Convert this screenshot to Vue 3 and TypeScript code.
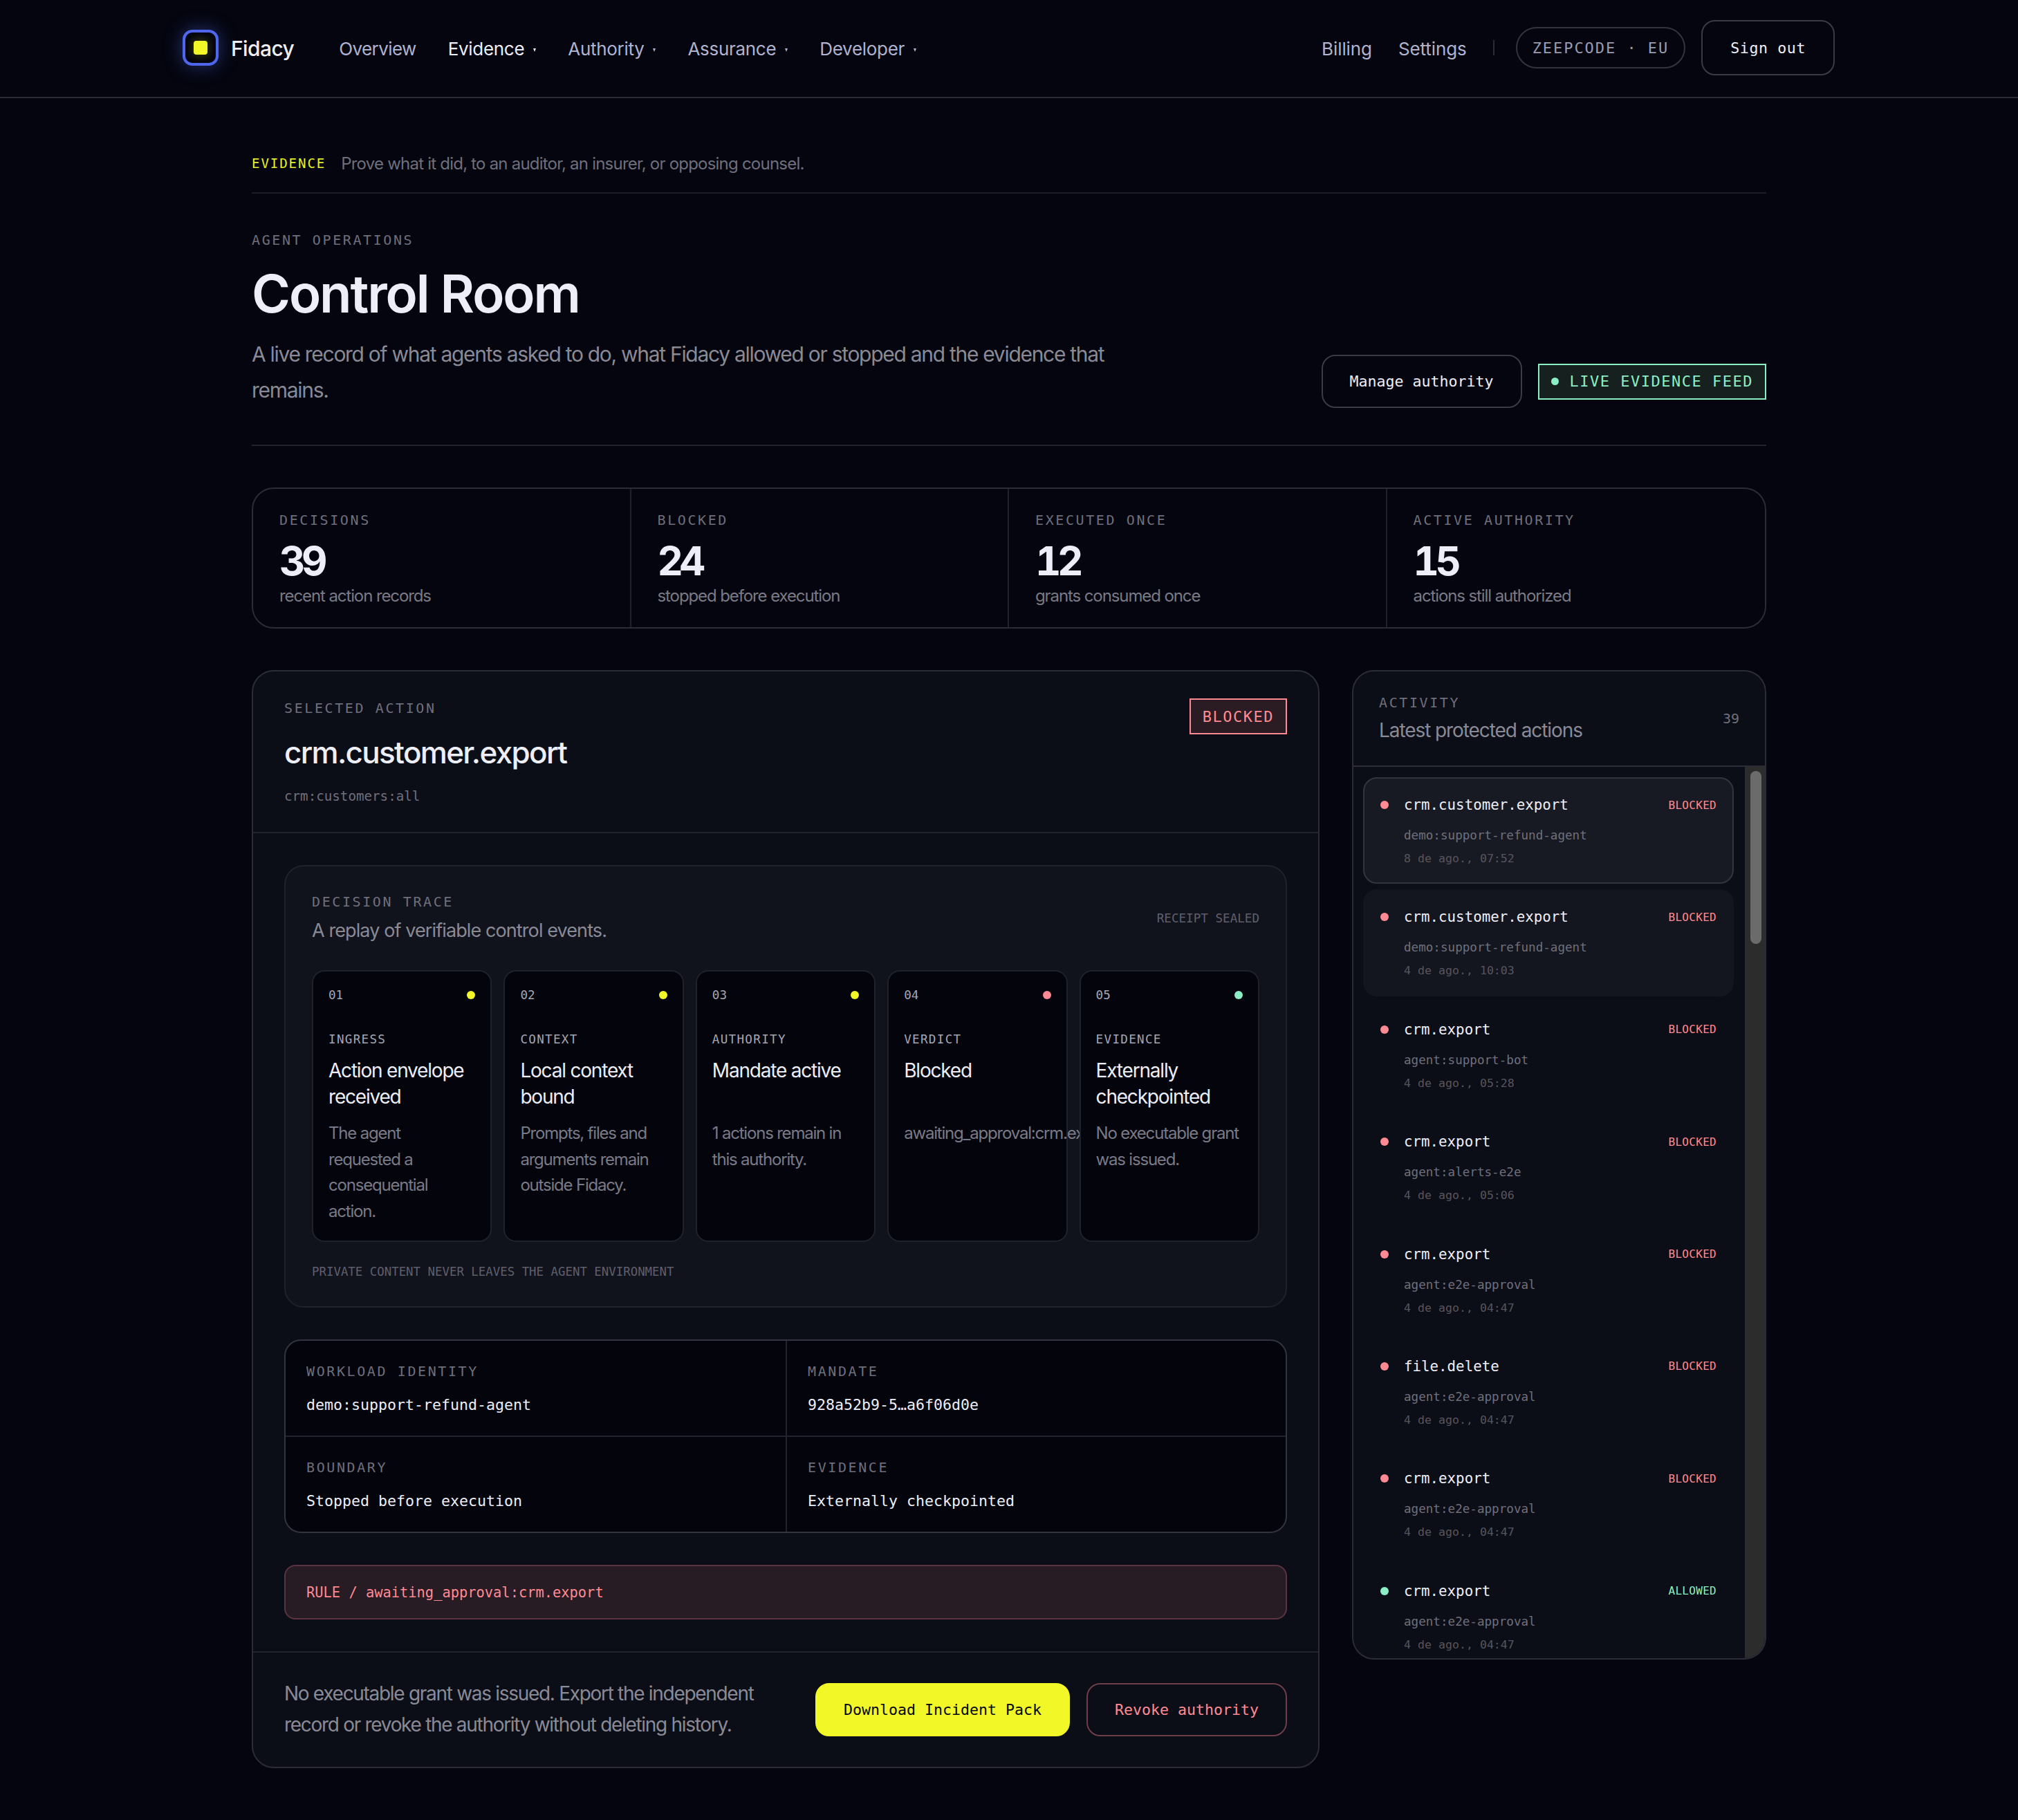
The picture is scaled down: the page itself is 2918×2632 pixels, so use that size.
<script setup lang="ts">
interface Stat {
  label: string
  value: string
  note: string
}

interface Step {
  num: string
  tone: 'warn' | 'bad' | 'ok'
  label: string
  title: string
  desc: string
}

interface Activity {
  name: string
  agent: string
  date: string
  status: 'BLOCKED' | 'ALLOWED'
  state?: 'active' | 'soft'
}

const navItems = [
  { label: 'Overview', caret: false, active: false },
  { label: 'Evidence', caret: true, active: true },
  { label: 'Authority', caret: true, active: false },
  { label: 'Assurance', caret: true, active: false },
  { label: 'Developer', caret: true, active: false }
]

const stats: Stat[] = [
  { label: 'DECISIONS', value: '39', note: 'recent action records' },
  { label: 'BLOCKED', value: '24', note: 'stopped before execution' },
  { label: 'EXECUTED ONCE', value: '12', note: 'grants consumed once' },
  { label: 'ACTIVE AUTHORITY', value: '15', note: 'actions still authorized' }
]

const steps: Step[] = [
  { num: '01', tone: 'warn', label: 'INGRESS', title: 'Action envelope received', desc: 'The agent requested a consequential action.' },
  { num: '02', tone: 'warn', label: 'CONTEXT', title: 'Local context bound', desc: 'Prompts, files and arguments remain outside Fidacy.' },
  { num: '03', tone: 'warn', label: 'AUTHORITY', title: 'Mandate active', desc: '1 actions remain in this authority.' },
  { num: '04', tone: 'bad', label: 'VERDICT', title: 'Blocked', desc: 'awaiting_approval:crm.export' },
  { num: '05', tone: 'ok', label: 'EVIDENCE', title: 'Externally checkpointed', desc: 'No executable grant was issued.' }
]

const facts = [
  { label: 'WORKLOAD IDENTITY', value: 'demo:support-refund-agent' },
  { label: 'MANDATE', value: '928a52b9-5…a6f06d0e' },
  { label: 'BOUNDARY', value: 'Stopped before execution' },
  { label: 'EVIDENCE', value: 'Externally checkpointed' }
]

const activity: Activity[] = [
  { name: 'crm.customer.export', agent: 'demo:support-refund-agent', date: '8 de ago., 07:52', status: 'BLOCKED', state: 'active' },
  { name: 'crm.customer.export', agent: 'demo:support-refund-agent', date: '4 de ago., 10:03', status: 'BLOCKED', state: 'soft' },
  { name: 'crm.export', agent: 'agent:support-bot', date: '4 de ago., 05:28', status: 'BLOCKED' },
  { name: 'crm.export', agent: 'agent:alerts-e2e', date: '4 de ago., 05:06', status: 'BLOCKED' },
  { name: 'crm.export', agent: 'agent:e2e-approval', date: '4 de ago., 04:47', status: 'BLOCKED' },
  { name: 'file.delete', agent: 'agent:e2e-approval', date: '4 de ago., 04:47', status: 'BLOCKED' },
  { name: 'crm.export', agent: 'agent:e2e-approval', date: '4 de ago., 04:47', status: 'BLOCKED' },
  { name: 'crm.export', agent: 'agent:e2e-approval', date: '4 de ago., 04:47', status: 'ALLOWED' }
]
</script>

<template>
  <div class="page">
    <header class="topbar">
      <div class="topbar-left">
        <div class="brand">
          <span class="brand-mark"><span class="brand-core"></span></span>
          <span class="brand-name">Fidacy</span>
        </div>
        <nav class="nav">
          <span
            v-for="item in navItems"
            :key="item.label"
            class="nav-item"
            :class="{ 'is-active': item.active }"
          >
            {{ item.label }}<i v-if="item.caret" class="caret"></i>
          </span>
        </nav>
      </div>
      <div class="topbar-right">
        <span class="nav-item">Billing</span>
        <span class="nav-item">Settings</span>
        <span class="divider"></span>
        <span class="org-pill">ZEEPCODE · EU</span>
        <button class="btn btn-signout">Sign out</button>
      </div>
    </header>

    <main class="content">
      <div class="eyebrow">
        <span class="eyebrow-tag">EVIDENCE</span>
        <span class="eyebrow-text">Prove what it did, to an auditor, an insurer, or opposing counsel.</span>
      </div>

      <section class="hero">
        <div class="hero-copy">
          <div class="label">AGENT OPERATIONS</div>
          <h1 class="hero-title">Control Room</h1>
          <p class="hero-desc">A live record of what agents asked to do, what Fidacy allowed or stopped and the evidence that remains.</p>
        </div>
        <div class="hero-actions">
          <button class="btn">Manage authority</button>
          <span class="live-badge"><i class="live-dot"></i>LIVE EVIDENCE FEED</span>
        </div>
      </section>

      <section class="stats">
        <div v-for="stat in stats" :key="stat.label" class="stat">
          <div class="label">{{ stat.label }}</div>
          <div class="stat-value">{{ stat.value }}</div>
          <div class="stat-note">{{ stat.note }}</div>
        </div>
      </section>

      <div class="columns">
        <section class="panel">
          <div class="panel-head">
            <div>
              <div class="label">SELECTED ACTION</div>
              <h2 class="action-title">crm.customer.export</h2>
              <div class="action-scope">crm:customers:all</div>
            </div>
            <span class="blocked-badge">BLOCKED</span>
          </div>

          <div class="panel-body">
            <div class="trace">
              <div class="trace-head">
                <div>
                  <div class="label">DECISION TRACE</div>
                  <div class="trace-sub">A replay of verifiable control events.</div>
                </div>
                <span class="trace-seal">RECEIPT SEALED</span>
              </div>
              <div class="steps">
                <article v-for="step in steps" :key="step.num" class="step">
                  <div class="step-top">
                    <span class="step-num">{{ step.num }}</span>
                    <i class="dot" :class="`dot-${step.tone}`"></i>
                  </div>
                  <div class="step-label">{{ step.label }}</div>
                  <h3 class="step-title">{{ step.title }}</h3>
                  <p class="step-desc">{{ step.desc }}</p>
                </article>
              </div>
              <div class="trace-note">PRIVATE CONTENT NEVER LEAVES THE AGENT ENVIRONMENT</div>
            </div>

            <div class="facts">
              <div v-for="fact in facts" :key="fact.label" class="fact">
                <div class="label">{{ fact.label }}</div>
                <div class="fact-value">{{ fact.value }}</div>
              </div>
            </div>

            <div class="rule">RULE / awaiting_approval:crm.export</div>
          </div>

          <div class="panel-foot">
            <p class="foot-text">No executable grant was issued. Export the independent record or revoke the authority without deleting history.</p>
            <div class="foot-actions">
              <button class="btn btn-primary">Download Incident Pack</button>
              <button class="btn btn-danger">Revoke authority</button>
            </div>
          </div>
        </section>

        <aside class="side">
          <div class="side-head">
            <div>
              <div class="label">ACTIVITY</div>
              <div class="side-title">Latest protected actions</div>
            </div>
            <span class="side-count">39</span>
          </div>
          <div class="side-body">
            <div class="feed">
              <div
                v-for="(row, index) in activity"
                :key="index"
                class="feed-item"
                :class="row.state ? `is-${row.state}` : ''"
              >
                <i class="dot" :class="row.status === 'BLOCKED' ? 'dot-bad' : 'dot-ok'"></i>
                <span class="feed-name">{{ row.name }}</span>
                <span class="feed-status" :class="{ 'is-ok': row.status === 'ALLOWED' }">{{ row.status }}</span>
                <span class="feed-agent">{{ row.agent }}</span>
                <span class="feed-date">{{ row.date }}</span>
              </div>
            </div>
            <div class="scroll-track"><div class="scroll-thumb"></div></div>
          </div>
        </aside>
      </div>
    </main>
  </div>
</template>

<style scoped>
.page {
  min-height: 2632px;
  background: #04050e;
  color: #eeeef8;
  font-family: Inter, "Noto Sans", sans-serif;
}

h1, h2, h3, p {
  margin: 0;
  font-weight: 500;
}

.label,
.btn,
.org-pill,
.eyebrow-tag,
.live-badge,
.blocked-badge,
.action-scope,
.trace-seal,
.trace-note,
.step-num,
.step-label,
.fact-value,
.rule,
.side-count,
.feed-name,
.feed-status,
.feed-agent,
.feed-date {
  font-family: "DejaVu Sans Mono", "Liberation Mono", monospace;
}

.label {
  font-size: 20px;
  line-height: 28px;
  letter-spacing: 2.6px;
  color: #6f6f7c;
}

/* Top bar */
.topbar {
  height: 142px;
  box-sizing: border-box;
  padding: 0 265px 2px 264px;
  display: flex;
  align-items: center;
  justify-content: space-between;
  border-bottom: 2px solid #2b2c37;
}

.topbar-left,
.topbar-right,
.brand,
.nav {
  display: flex;
  align-items: center;
}

.brand {
  gap: 18px;
  margin-right: 65px;
}

.brand-mark {
  width: 52px;
  height: 52px;
  box-sizing: border-box;
  border: 4px solid #4f66ee;
  border-radius: 14px;
  display: flex;
  align-items: center;
  justify-content: center;
  box-shadow: 0 0 28px rgba(79, 102, 238, 0.45);
}

.brand-core {
  width: 20px;
  height: 20px;
  border-radius: 4px;
  background: #f2f728;
  box-shadow: 0 0 14px rgba(242, 247, 40, 0.3);
}

.brand-name {
  padding-top: 2px;
  font-size: 30px;
  font-weight: 500;
  letter-spacing: -0.6px;
  color: #eeeef8;
}

.nav {
  gap: 46px;
}

.nav-item {
  padding-top: 2px;
  font-size: 26px;
  letter-spacing: -0.3px;
  color: #b0b3cf;
  white-space: nowrap;
}

.nav .nav-item:first-child {
  letter-spacing: -0.6px;
}

.topbar-right .nav-item {
  letter-spacing: -0.1px;
}

.nav-item.is-active {
  color: #eeeef8;
}

.caret {
  display: inline-block;
  margin-left: 13px;
  vertical-align: middle;
  border-left: 2.5px solid transparent;
  border-right: 2.5px solid transparent;
  border-top: 5px solid currentColor;
}

.topbar-right {
  gap: 38px;
}

.topbar-right .org-pill {
  margin-left: -7px;
  margin-right: -15px;
}

.divider {
  width: 2px;
  height: 22px;
  background: #2b2c37;
}

.org-pill {
  box-sizing: border-box;
  height: 60px;
  padding: 0 22px;
  display: flex;
  align-items: center;
  border: 2px solid #33343f;
  border-radius: 30px;
  font-size: 22px;
  letter-spacing: 1.95px;
  color: #9a9cb0;
  white-space: nowrap;
}

.btn {
  box-sizing: border-box;
  height: 77px;
  padding: 0 39px;
  background: transparent;
  border: 2px solid #3a3b47;
  border-radius: 20px;
  font-size: 21.6px;
  color: #eeeef8;
  white-space: nowrap;
}

.btn-signout {
  height: 80px;
  padding: 0 40px;
  letter-spacing: 0.6px;
}

/* Page head */
.content {
  width: 2190px;
  margin: 0 auto;
  padding-top: 78px;
}

.eyebrow {
  display: flex;
  align-items: center;
  gap: 22px;
  height: 32px;
  padding-bottom: 26px;
  border-bottom: 2px solid #1c1d27;
}

.eyebrow-tag {
  font-size: 19.2px;
  letter-spacing: 1.85px;
  color: #e6f02a;
}

.eyebrow-text {
  font-size: 24px;
  letter-spacing: -0.78px;
  color: #6f6f7c;
}

.hero {
  display: flex;
  align-items: flex-end;
  justify-content: space-between;
  padding: 53px 0 53px;
  border-bottom: 2px solid #22232e;
}

.hero-copy {
  width: 1290px;
}

.hero-title {
  margin-top: 21px;
  font-size: 76px;
  line-height: 84px;
  font-weight: 600;
  letter-spacing: -2.1px;
  color: #eeeef8;
}

.hero-desc {
  margin-top: 20px;
  font-size: 30px;
  line-height: 52px;
  font-weight: 400;
  letter-spacing: -1.29px;
  color: #8a8a96;
}

.hero-actions {
  display: flex;
  align-items: center;
  gap: 23px;
}

.live-badge {
  box-sizing: border-box;
  height: 52px;
  padding: 0 17px;
  display: flex;
  align-items: center;
  gap: 16px;
  border: 2px solid #8ceec4;
  background: #16201f;
  font-size: 22px;
  letter-spacing: 1.5px;
  color: #8ceec4;
  white-space: nowrap;
}

.live-dot {
  width: 11px;
  height: 11px;
  border-radius: 50%;
  background: #8ceec4;
}

/* Stats */
.stats {
  margin-top: 60px;
  display: grid;
  grid-template-columns: repeat(4, 1fr);
  border: 2px solid #2b2c37;
  border-radius: 32px;
  overflow: hidden;
}

.stat {
  padding: 31px 38px 29px;
  border-right: 2px solid #1f2029;
}

.stat:last-child {
  border-right: 0;
}

.stat-value {
  margin-top: 13px;
  font-size: 58px;
  line-height: 64px;
  font-weight: 700;
  font-variant-numeric: tabular-nums;
  letter-spacing: -5.5px;
  color: #eeeef8;
}

.stat-note {
  margin-top: 3px;
  font-size: 24px;
  line-height: 32px;
  letter-spacing: -1.1px;
  color: #7a7a86;
}

/* Columns */
.columns {
  margin-top: 60px;
  display: grid;
  grid-template-columns: minmax(0, 1fr) 599px;
  gap: 47px;
  align-items: start;
}

.panel,
.side {
  border: 2px solid #2b2c37;
  border-radius: 32px;
  background: #0c0e17;
}

.panel-head {
  display: flex;
  align-items: flex-start;
  justify-content: space-between;
  padding: 39px 45px 37px;
  border-bottom: 2px solid #22232e;
}

.action-title {
  margin-top: 22px;
  font-size: 44px;
  line-height: 56px;
  letter-spacing: -1.7px;
  color: #eeeef8;
}

.action-scope {
  margin-top: 22px;
  font-size: 19.2px;
  line-height: 28px;
  color: #6f6f7c;
}

.blocked-badge {
  box-sizing: border-box;
  height: 52px;
  padding: 0 17px;
  display: flex;
  align-items: center;
  border: 2px solid #ff8a94;
  background: #2a1c22;
  font-size: 22px;
  letter-spacing: 1.5px;
  color: #ff8a94;
}

.panel-body {
  padding: 46px 45px;
}

/* Trace */
.trace {
  padding: 37px 38px 37px;
  border: 2px solid #1f212b;
  border-radius: 28px;
  background: #11131c;
}

.trace-head {
  display: flex;
  align-items: center;
  justify-content: space-between;
}

.trace-sub {
  margin-top: 8px;
  font-size: 27px;
  line-height: 40px;
  font-weight: 400;
  letter-spacing: -0.9px;
  color: #8a8a96;
}

.trace-seal {
  font-size: 17.6px;
  color: #5f5f6c;
}

.steps {
  margin-top: 37px;
  display: grid;
  grid-template-columns: repeat(5, minmax(0, 1fr));
  gap: 17px;
}

.step {
  position: relative;
  box-sizing: border-box;
  min-height: 393px;
  padding: 22px;
  border: 2px solid #1f212b;
  border-radius: 18px;
  background: #03040c;
}

.step-top {
  display: flex;
  align-items: center;
  justify-content: space-between;
  height: 24px;
}

.step-num {
  font-size: 17.6px;
  color: #a6a6b2;
}

.dot {
  flex: none;
  display: block;
  width: 12px;
  height: 12px;
  border-radius: 50%;
}

.dot-warn {
  background: #f2f728;
}

.dot-bad {
  background: #ff8a94;
}

.dot-ok {
  background: #8ceec4;
}

.step-label {
  margin-top: 40px;
  font-size: 17.6px;
  line-height: 24px;
  letter-spacing: 1.3px;
  color: #a6a6b2;
}

.step-title {
  margin-top: 14px;
  min-height: 76px;
  font-size: 28px;
  line-height: 38px;
  font-weight: 400;
  letter-spacing: -1.2px;
  color: #eeeef8;
}

.step-desc {
  margin-top: 15px;
  font-size: 24px;
  line-height: 37.6px;
  font-weight: 400;
  letter-spacing: -1.2px;
  color: #7a7a86;
  white-space: normal;
}

.trace-note {
  margin-top: 30px;
  font-size: 17.4px;
  line-height: 26px;
  color: #5f5f6c;
}

/* Facts */
.facts {
  margin-top: 46px;
  display: grid;
  grid-template-columns: 1fr 1fr;
  border: 2px solid #33343f;
  border-radius: 24px;
  background: #03040c;
  overflow: hidden;
}

.fact {
  padding: 30px 30px 28px;
}

.fact:nth-child(even) {
  border-left: 2px solid #22232e;
}

.fact:nth-child(n + 3) {
  border-top: 2px solid #22232e;
}

.fact-value {
  margin-top: 19px;
  font-size: 21.6px;
  line-height: 32px;
  color: #eeeef8;
}

.rule {
  margin-top: 46px;
  box-sizing: border-box;
  height: 79px;
  padding: 0 30px;
  display: flex;
  align-items: center;
  border: 2px solid #5a343f;
  border-radius: 16px;
  background: #271b24;
  font-size: 20.4px;
  color: #ff8a94;
}

/* Panel footer */
.panel-foot {
  display: flex;
  align-items: center;
  justify-content: space-between;
  padding: 37px 45px 38px;
  border-top: 2px solid #22232e;
}

.foot-text {
  max-width: 720px;
  font-size: 28px;
  line-height: 45px;
  font-weight: 400;
  letter-spacing: -1.3px;
  color: #8a8a96;
}

.foot-actions {
  flex: none;
  display: flex;
  gap: 24px;
}

.btn-primary {
  background: #f2f728;
  border-color: #f2f728;
  color: #04050e;
}

.btn-danger {
  border-color: #6d3d48;
  color: #ff8a94;
}

/* Side */
.side {
  height: 1431px;
  box-sizing: border-box;
  display: flex;
  flex-direction: column;
  overflow: hidden;
}

.side-head {
  display: flex;
  align-items: center;
  justify-content: space-between;
  padding: 31px 37px 31px;
  border-bottom: 2px solid #2b2c37;
}

.side-title {
  margin-top: 6px;
  font-size: 28px;
  line-height: 40px;
  letter-spacing: -1.08px;
  color: #8a8a96;
}

.side-count {
  font-size: 20px;
  color: #6f6f7c;
}

.side-body {
  flex: 1;
  min-height: 0;
  display: flex;
}

.feed {
  flex: 1;
  min-width: 0;
  overflow: hidden;
  padding: 15px 16px 0 14px;
  display: flex;
  flex-direction: column;
  gap: 8px;
}

.feed-item {
  flex: none;
  box-sizing: border-box;
  height: 154.4px;
  padding: 24px 23px 0;
  display: grid;
  grid-template-columns: 12px minmax(0, 1fr) auto;
  column-gap: 22px;
  align-items: center;
  align-content: start;
  border: 2px solid transparent;
  border-radius: 20px;
}

.feed-item.is-active {
  background: #181a23;
  border-color: #33343f;
}

.feed-item.is-soft {
  background: #14161f;
}

.feed-name {
  font-size: 20.8px;
  line-height: 28px;
  color: #eeeef8;
}

.feed-status {
  font-size: 16px;
  letter-spacing: 0.3px;
  color: #ff8a94;
}

.feed-status.is-ok {
  color: #8ceec4;
}

.feed-agent {
  grid-column: 2 / 4;
  margin-top: 17px;
  font-size: 17.6px;
  line-height: 26px;
  color: #6f6f7c;
}

.feed-date {
  grid-column: 2 / 4;
  margin-top: 8px;
  font-size: 16.6px;
  line-height: 26px;
  color: #55555f;
}

.scroll-track {
  flex: none;
  box-sizing: border-box;
  width: 29px;
  padding: 6px 5px 0 8px;
  background: #2c2c2c;
}

.scroll-thumb {
  height: 250px;
  border-radius: 8px;
  background: #6b6b6b;
}
</style>

<style>
html,
body {
  margin: 0;
  background: #04050e;
}
</style>
